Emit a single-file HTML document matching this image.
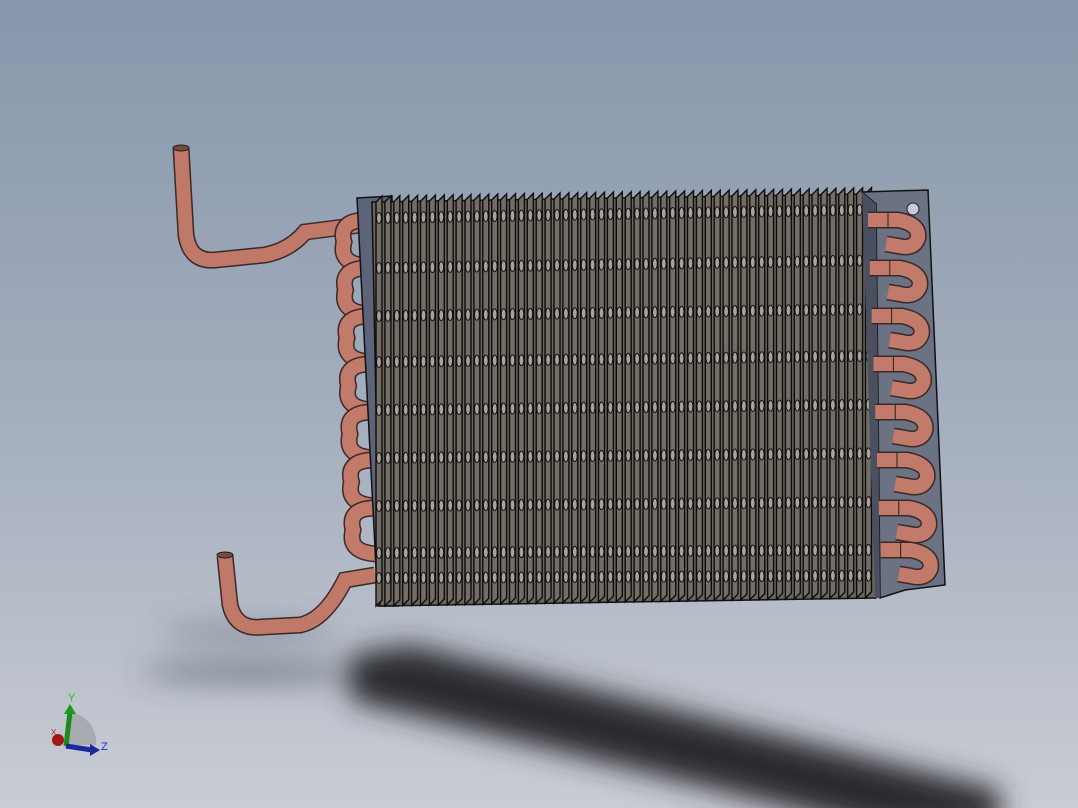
<!DOCTYPE html>
<html><head><meta charset="utf-8"><style>
html,body{margin:0;padding:0;width:1078px;height:808px;overflow:hidden}
svg{display:block}
</style></head><body>
<svg id="s" width="1078" height="808" viewBox="0 0 1078 808" xmlns="http://www.w3.org/2000/svg">
<defs>
<linearGradient id="bg" x1="0" y1="0" x2="0" y2="1">
<stop offset="0" stop-color="#8797ab"/><stop offset="0.5" stop-color="#a3adbd"/><stop offset="1" stop-color="#c9ccd4"/>
</linearGradient>
<filter id="bl" x="-20%" y="-50%" width="140%" height="200%"><feGaussianBlur stdDeviation="14"/></filter>
</defs>
<rect width="1078" height="808" fill="url(#bg)"/>
<g filter="url(#bl)">
<polygon points="350,655 410,645 1000,790 1000,830 880,830 350,700" fill="#2a2b2e"/>
<ellipse cx="250" cy="632" rx="90" ry="8" fill="#5a6070" opacity="0.6"/>
<ellipse cx="250" cy="672" rx="110" ry="10" fill="#4a4e58" opacity="0.6"/>
</g>
<g fill="none" stroke-linecap="butt">
<path d="M181,148 L186,235 Q190,262 215,260 L265,255 Q290,250 305,232 L360,225" stroke="#3a2a26" stroke-width="17"/>
<path d="M181,148 L186,235 Q190,262 215,260 L265,255 Q290,250 305,232 L360,225" stroke="#c07868" stroke-width="14"/>
<path d="M225,556 L230,605 Q236,630 262,627 L300,625 Q325,620 345,580 L375,575" stroke="#3a2a26" stroke-width="17"/>
<path d="M225,556 L230,605 Q236,630 262,627 L300,625 Q325,620 345,580 L375,575" stroke="#c07868" stroke-width="14"/>
</g>
<ellipse cx="181" cy="148" rx="8" ry="3" fill="#7a4a40" stroke="#222"/>
<ellipse cx="225" cy="555" rx="8" ry="3" fill="#7a4a40" stroke="#222"/>
<g id="leftbends"></g>
<polygon points="357,198 392,196 398,606 378,606" fill="#5b6478" stroke="#111" stroke-width="1.5"/>
<polygon points="372,202 868,194 876,598 380,606" fill="#69645d" stroke="#111" stroke-width="1.5"/>
<g id="fins"></g>
<polygon points="862,192 928,190 945,585 905,590 880,598 876,204" fill="#6b7284" stroke="#111" stroke-width="1.5"/>
<polygon points="862,192 876,204 880,598 875,598" fill="#4a5060"/>
<circle cx="913" cy="209" r="6" fill="#c9ccd6" stroke="#222"/>
<circle cx="928" cy="575" r="4" fill="#c9ccd6" stroke="#222"/>
<g id="rightbends"></g>
<path d="M68,745 L68,712 A30,30 0 0 1 96,745 Z" fill="#a0a2a6" opacity="0.8"/>
<line x1="66" y1="746" x2="70" y2="712" stroke="#1a8a1a" stroke-width="5"/>
<polygon points="64,714 76,714 70,704" fill="#1a9a1a"/>
<line x1="66" y1="746" x2="92" y2="750" stroke="#1a28a0" stroke-width="5"/>
<polygon points="90,744 90,756 100,750" fill="#1a28a0"/>
<circle cx="58" cy="740" r="6" fill="#a01818"/>
<text x="68" y="701" font-family="Liberation Sans,sans-serif" font-size="11" fill="#20c020">Y</text>
<text x="101" y="750" font-family="Liberation Sans,sans-serif" font-size="11" fill="#1a2ad0">Z</text>
<text x="51" y="735" font-family="Liberation Sans,sans-serif" font-size="8" fill="#c02020">X</text>
</svg>
<script>
var NS="http://www.w3.org/2000/svg";
function el(p,t,a){var e=document.createElementNS(NS,t);for(var k in a)e.setAttribute(k,a[k]);p.appendChild(e);return e;}
var fins=document.getElementById("fins");
var rows=[218,268,316,362,410,458,506,553,578];
for(var i=0;i<56;i++){
 var x=376+i*8.9, yt=202-i*0.15, yb=606-i*0.15;
 el(fins,"path",{d:"M"+x+","+yt+" l6,-6 l0,"+(yb-yt)+" l-6,6 Z",fill:"#736d66",stroke:"#0d0d0d","stroke-width":"1.4"});
 for(var r=0;r<rows.length;r++){
  var y=rows[r]-i*0.15+(r/8)*6*(i/56);
  el(fins,"ellipse",{cx:x+3,cy:y,rx:2.4,ry:5.5,fill:"#a9a39b",stroke:"#111","stroke-width":"1"});
 }
}
var lb=document.getElementById("leftbends");
var ly=[242,290,338,386,434,482,530];
ly.forEach(function(y,j){var x=352+j*1.5;
 var d="M"+(x+15)+","+(y-22)+" Q"+(x-14)+","+(y-22)+" "+(x-8)+","+y+" Q"+(x-14)+","+(y+22)+" "+(x+15)+","+(y+24);
 el(lb,"path",{d:d,fill:"none",stroke:"#3a2a26","stroke-width":"17"});
 el(lb,"path",{d:d,fill:"none",stroke:"#c27a6a","stroke-width":"14"});
});
var rb=document.getElementById("rightbends");
var ry=[230,278,326,374,422,470,518,560];
ry.forEach(function(y,j){var x=868+j*1.8;
 var d="M"+x+","+(y-10)+" L"+(x+30)+","+(y-10)+" Q"+(x+52)+","+(y-6)+" "+(x+50)+","+(y+8)+" Q"+(x+46)+","+(y+20)+" "+(x+30)+","+(y+16)+" L"+(x+18)+","+(y+14);
 el(rb,"path",{d:d,fill:"none",stroke:"#3a2a26","stroke-width":"17"});
 el(rb,"path",{d:d,fill:"none",stroke:"#c27a6a","stroke-width":"14"});
 el(rb,"line",{x1:x+20,y1:y-18,x2:x+20,y2:y-2,stroke:"#222","stroke-width":"1"});
});
</script>
</body></html>
